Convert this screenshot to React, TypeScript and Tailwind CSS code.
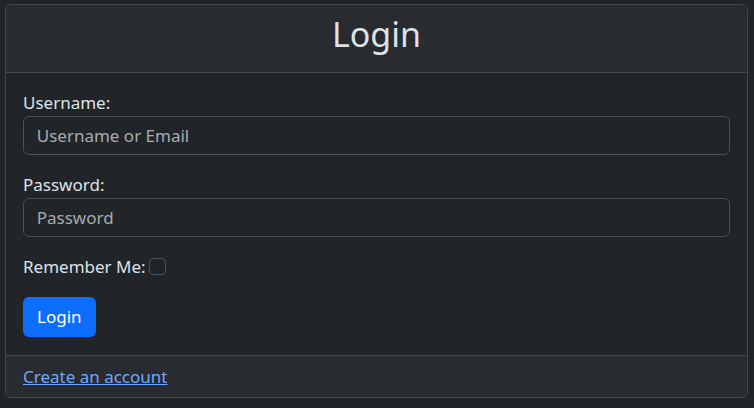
import React from "react";

const font = { fontFamily: '"Noto Sans", "Open Sans", sans-serif' };

export default function App() {
  return (
    <div className="min-h-[408px] w-full bg-[#212529] pt-[4px] pl-[5px] text-[#dee2e6]" style={font}>
      <div className="w-[743px] rounded-[6px] border border-[#44484c] overflow-hidden">
        {/* Header */}
        <div className="h-[68px] bg-[#282b30] border-b border-[#44484c] pt-[8.5px] text-center">
          <h1 className="text-[34px] leading-[41.5px] font-normal text-[#dee2e6]">Login</h1>
        </div>

        {/* Body */}
        <form className="px-[17px] pt-[17px] pb-[17.5px]" onSubmit={(e) => e.preventDefault()}>
          <label className="block text-[17px] leading-[25.5px]">Username:</label>
          <input
            type="text"
            placeholder="Username or Email"
            className="block w-full h-[39.5px] rounded-[6px] border border-[#495057] bg-[#212529] px-[12.75px] text-[17px] text-[#dee2e6] placeholder:text-[#a7abaf] outline-none"
          />

          <label className="block mt-[17px] text-[17px] leading-[25.5px]">Password:</label>
          <input
            type="password"
            placeholder="Password"
            className="block w-full h-[39.5px] rounded-[6px] border border-[#495057] bg-[#212529] px-[12.75px] text-[17px] text-[#dee2e6] placeholder:text-[#a7abaf] outline-none"
          />

          <div className="mt-[17px] flex items-center text-[17px] leading-[25.5px]">
            <span>Remember Me:</span>
            <input
              type="checkbox"
              className="ml-[3px] appearance-none w-[17px] h-[17px] rounded-[4px] border border-[#495057] bg-[#212529]"
            />
          </div>

          <button
            type="submit"
            className="mt-[17.5px] h-[40px] rounded-[6px] bg-[#0d6efd] px-[14px] text-[17px] leading-[25.5px] text-white"
          >
            Login
          </button>
        </form>

        {/* Footer */}
        <div className="border-t border-[#44484c] bg-[#282b30] px-[17px] py-[8px] text-[17px] leading-[25.5px]">
          <a href="#" className="text-[#6ea8fe] underline">
            Create an account
          </a>
        </div>
      </div>
    </div>
  );
}
